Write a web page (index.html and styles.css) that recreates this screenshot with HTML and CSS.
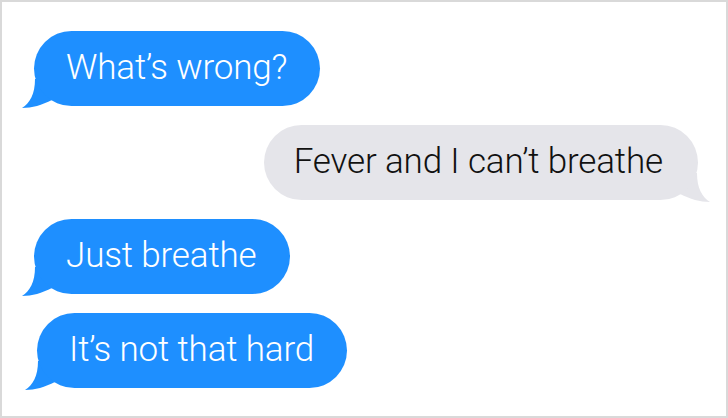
FILE: index.html
```html
<!DOCTYPE html>
<html lang="en">
<head>
  <meta charset="utf-8">
  <meta name="viewport" content="width=device-width, initial-scale=1" />
  <title>Messages</title>
  <link rel="stylesheet" href="styles.css">
</head>
<body>
  <div id="frame">
    <div class="thread">
      <div class="msg in">
        <p class="bubble">What’s wrong?</p>
        <svg class="tail" viewBox="0 0 40 32" width="40" height="32"><path d="M15 2 C15 17 10 26 2 31 C12 31 22 28 32 23 L32 2 Z"/></svg>
      </div>
      <div class="msg out">
        <p class="bubble">Fever and I can’t breathe</p>
        <svg class="tail" viewBox="0 0 40 32" width="40" height="32"><path d="M25 2 C25 17 30 26 38 31 C28 31 18 28 8 23 L8 2 Z"/></svg>
      </div>
      <div class="msg in">
        <p class="bubble">Just breathe</p>
        <svg class="tail" viewBox="0 0 40 32" width="40" height="32"><path d="M15 2 C15 17 10 26 2 31 C12 31 22 28 32 23 L32 2 Z"/></svg>
      </div>
      <div class="msg in nudge">
        <p class="bubble">It’s not that hard</p>
        <svg class="tail" viewBox="0 0 40 32" width="40" height="32"><path d="M15 2 C15 17 10 26 2 31 C12 31 22 28 32 23 L32 2 Z"/></svg>
      </div>
    </div>
  </div>
</body>
</html>
```

FILE: styles.css
```css
html, body {
  margin: 0;
  background: #fff;
}
#frame {
  width: 728px;
  height: 418px;
  box-sizing: border-box;
  border: 2px solid #d9d9d9;
  overflow: hidden;
}
.thread {
  display: flex;
  flex-direction: column;
  gap: 19px;
  padding: 29px 28px 0 32px;
}
.msg {
  position: relative;
  display: flex;
}
.msg.out {
  justify-content: flex-end;
}
.msg.nudge {
  margin-left: 3px;
}
.bubble {
  position: relative;
  z-index: 1;
  margin: 0;
  padding: 16px 33px 17px 32px;
  border-radius: 38px;
  font-family: Roboto, "Liberation Sans", sans-serif;
  font-weight: 300;
  font-size: 35px;
  letter-spacing: -0.15px;
  line-height: 42px;
  white-space: nowrap;
}
.in .bubble {
  background: #1e8fff;
  color: #fff;
}
.out .bubble {
  background: #e5e5ea;
  color: #111;
  padding: 16px 35px 17px 30px;
}
.tail {
  position: absolute;
  bottom: -3px;
}
.in .tail {
  left: -14px;
  fill: #1e8fff;
}
.out .tail {
  right: -14px;
  fill: #e5e5ea;
}
```
